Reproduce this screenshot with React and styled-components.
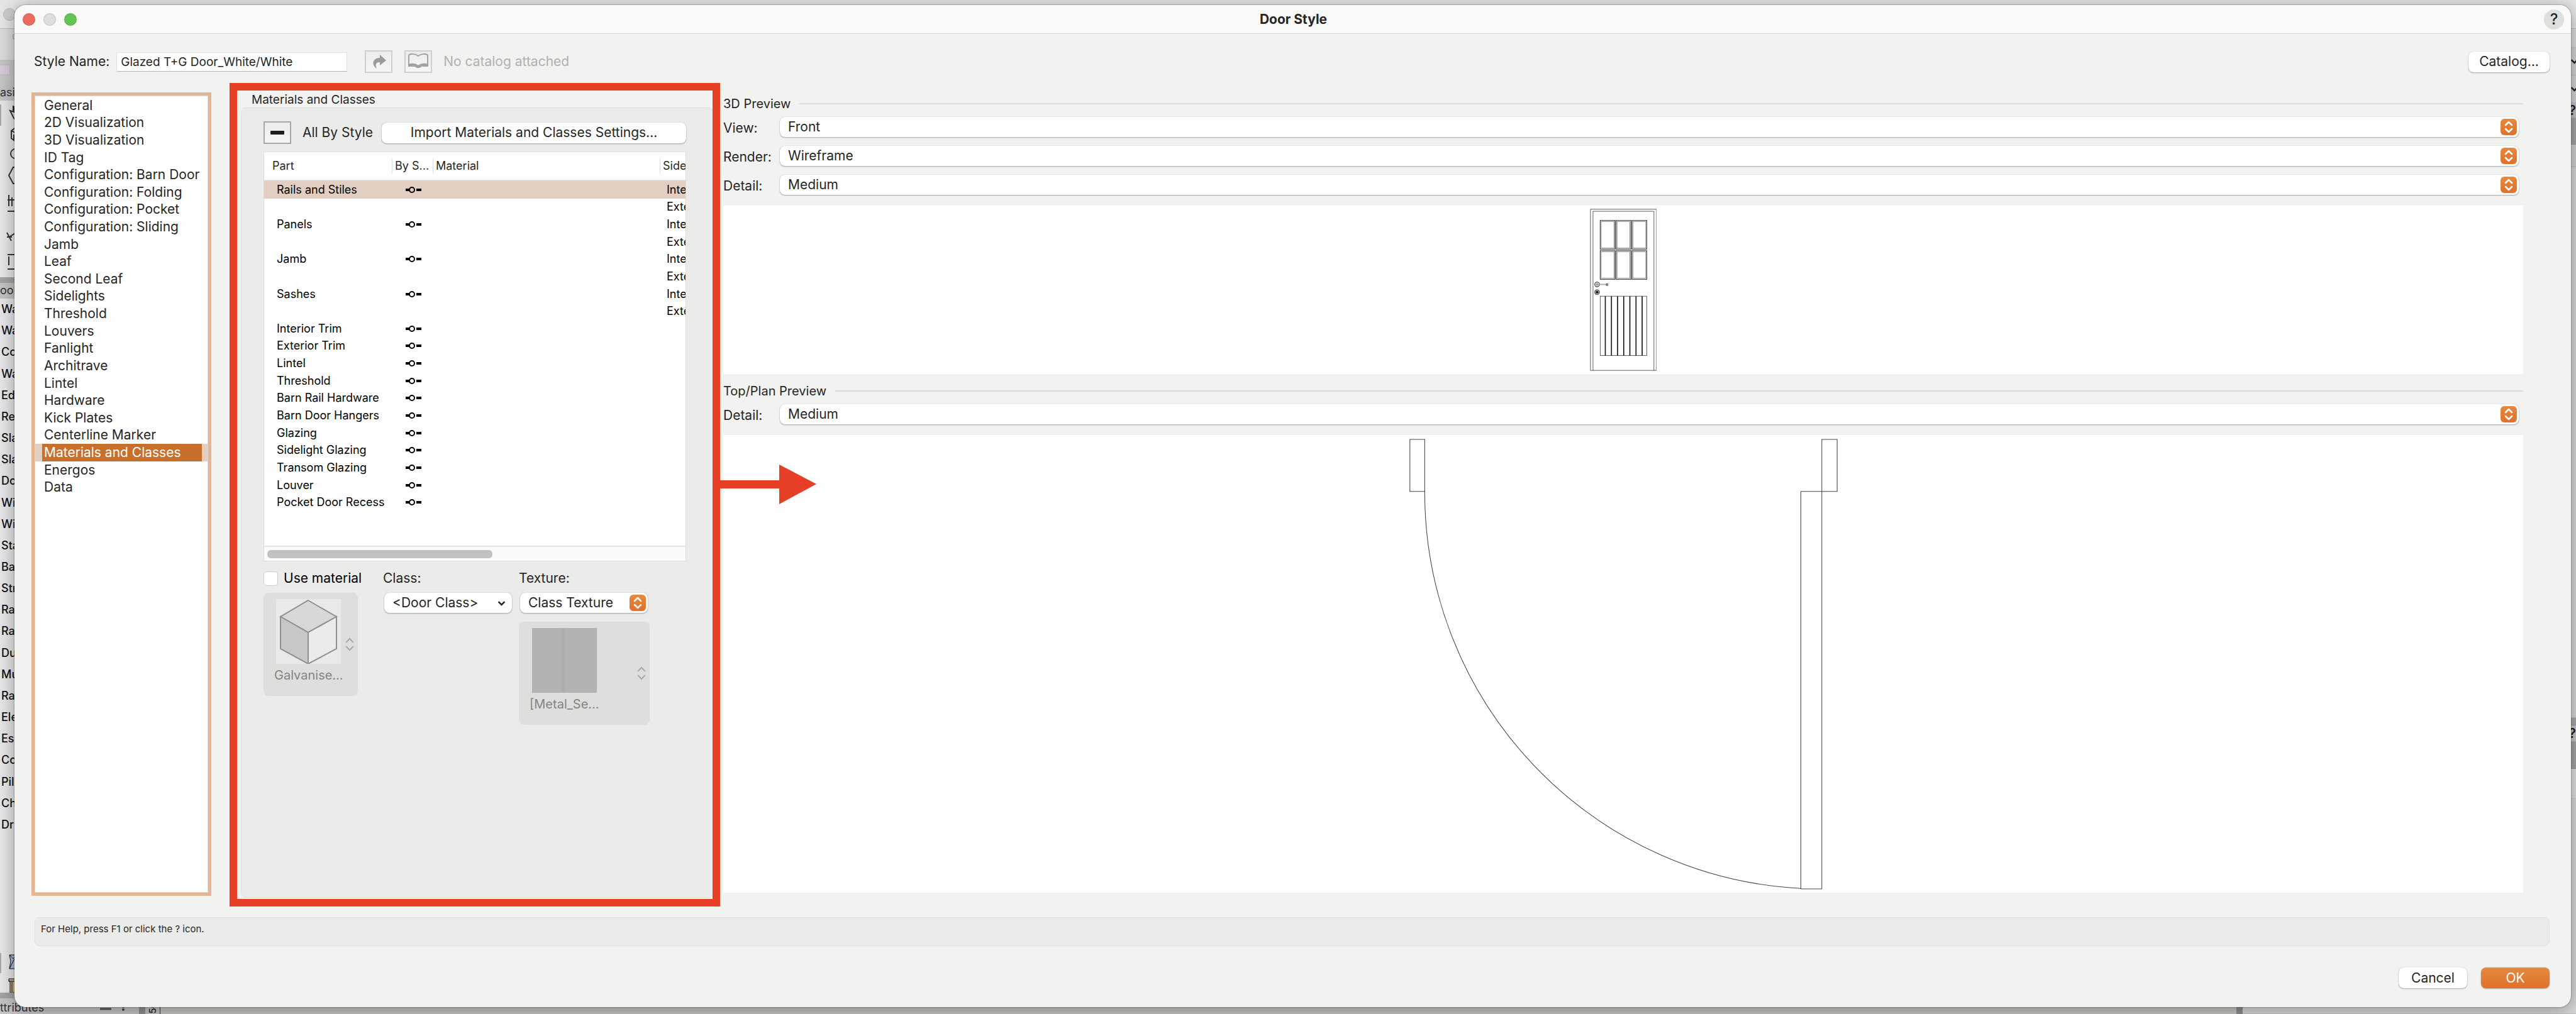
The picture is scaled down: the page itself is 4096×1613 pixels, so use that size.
import React from "react";
import styled, { createGlobalStyle } from "styled-components";

const COLORS = {
  text: "#262626",
  window: "#f2f2f0",
  titleBar: "#f9f9f7",
  group: "#ebebe9",
  line: "#d5d5d3",
  accent: "#c86f2c",
  accentSoft: "#e3cfc2",
  ring: "#e5b592",
  orangeTop: "#e58a3f",
  orangeBottom: "#e1702a",
  red: "#e63f25",
};

const CATEGORIES = [
  "General",
  "2D Visualization",
  "3D Visualization",
  "ID Tag",
  "Configuration: Barn Door",
  "Configuration: Folding",
  "Configuration: Pocket",
  "Configuration: Sliding",
  "Jamb",
  "Leaf",
  "Second Leaf",
  "Sidelights",
  "Threshold",
  "Louvers",
  "Fanlight",
  "Architrave",
  "Lintel",
  "Hardware",
  "Kick Plates",
  "Centerline Marker",
  "Materials and Classes",
  "Energos",
  "Data",
];

const PARTS = [
  { name: "Rails and Stiles", side: "Inte", selected: true },
  { side: "Exte" },
  { name: "Panels", side: "Inte" },
  { side: "Exte" },
  { name: "Jamb", side: "Inte" },
  { side: "Exte" },
  { name: "Sashes", side: "Inte" },
  { side: "Exte" },
  { name: "Interior Trim" },
  { name: "Exterior Trim" },
  { name: "Lintel" },
  { name: "Threshold" },
  { name: "Barn Rail Hardware" },
  { name: "Barn Door Hangers" },
  { name: "Glazing" },
  { name: "Sidelight Glazing" },
  { name: "Transom Glazing" },
  { name: "Louver" },
  { name: "Pocket Door Recess" },
];

const TOOLS = [
  "Wa", "Wa", "Cor", "Wa", "Edi", "Ren", "Sla", "Sla", "Doc", "Win", "Win", "Sta", "Bas",
  "Str", "Rai", "Rai", "Dup", "Mu", "Ran", "Ele", "Esc", "Col", "Pila", "Cha", "Dri",
];

const App = () => (
  <Desktop>
    <GlobalStyle />
    <Backdrop />
    <Dialog>
      <TitleBar>
        <Lights>
          <Light color="#ed6a5e" />
          <Light color="#dededc" />
          <Light color="#62c554" />
        </Lights>
        <Title>Door Style</Title>
        <HelpButton>?</HelpButton>
      </TitleBar>

      <Body>
        <Header>
          <label htmlFor="style-name">Style Name:</label>
          <NameInput id="style-name" defaultValue="Glazed T+G Door_White/White" />
          <IconButton aria-label="Reload">
            <ArrowIcon />
          </IconButton>
          <IconButton aria-label="Open catalog">
            <BookIcon />
          </IconButton>
          <Muted>No catalog attached</Muted>
          <CatalogButton>Catalog...</CatalogButton>
        </Header>

        <Main>
          <CategoryList>
            {CATEGORIES.map((name) => (
              <Category key={name} $selected={name === "Materials and Classes"}>
                <CategoryButton>{name}</CategoryButton>
              </Category>
            ))}
          </CategoryList>
          <MaterialsPanel />
          <Previews />
        </Main>

        <HelpBar>For Help, press F1 or click the ? icon.</HelpBar>

        <Footer>
          <PushButton>Cancel</PushButton>
          <PushButton $primary>OK</PushButton>
        </Footer>
      </Body>
    </Dialog>
  </Desktop>
);

export default App;

const MaterialsPanel = () => (
  <PanelColumn>
    <GroupTitle>Materials and Classes</GroupTitle>
    <GroupBox>
      <ByStyleRow>
        <IconButton $strong aria-label="All By Style">
          <Dash />
        </IconButton>
        <ByStyleText>All By Style</ByStyleText>
        <ImportButton>Import Materials and Classes Settings...</ImportButton>
      </ByStyleRow>

      <TableFrame>
        <PartTable>
          <thead>
            <HeadRow>
              <th>Part</th>
              <th>By S...</th>
              <th>Material</th>
              <th>Side</th>
            </HeadRow>
          </thead>
          <PartRows>
            {PARTS.map(({ name, side, selected }, index) => (
              <PartRow key={index} $selected={selected}>
                <td>{name}</td>
                <td>{name && <ByStyleIcon />}</td>
                <td />
                <td>{side}</td>
              </PartRow>
            ))}
          </PartRows>
        </PartTable>
        <ScrollTrack>
          <ScrollThumb />
        </ScrollTrack>
      </TableFrame>

      <Attributes>
        <CheckLabel>
          <CheckBox type="checkbox" />
          Use material
        </CheckLabel>
        <label htmlFor="class">Class:</label>
        <label htmlFor="texture">Texture:</label>

        <ResourceButton disabled>
          <Swatch>
            <CubeIcon />
            <span>Galvanise...</span>
          </Swatch>
          <StepperIcon />
        </ResourceButton>
        <SmallSelect>
          <Select id="class" defaultValue="<Door Class>">
            <option>{"<Door Class>"}</option>
          </Select>
          <Chevron viewBox="0 0 16 10">
            <path d="M2 2l6 6 6-6" />
          </Chevron>
        </SmallSelect>
        <TextureColumn>
          <SmallSelect>
            <Select id="texture" defaultValue="Class Texture">
              <option>Class Texture</option>
            </Select>
            <Stepper />
          </SmallSelect>
          <ResourceButton disabled $wide>
            <Swatch>
              <MetalTexture />
              <span>[Metal_Se...</span>
            </Swatch>
            <StepperIcon />
          </ResourceButton>
        </TextureColumn>
      </Attributes>
    </GroupBox>
    <Highlight />
    <HighlightArrow viewBox="0 0 154 66">
      <path d="M0 26h95V1l59 31-59 32V39H0z" />
    </HighlightArrow>
  </PanelColumn>
);

const Previews = () => (
  <PreviewColumn>
    <PreviewTitle>3D Preview</PreviewTitle>
    <Fields>
      <Field label="View:" id="view" value="Front" />
      <Field label="Render:" id="render" value="Wireframe" />
      <Field label="Detail:" id="detail-3d" value="Medium" />
    </Fields>
    <Canvas $height="268px">
      <DoorElevation />
    </Canvas>
    <PreviewTitle $second>Top/Plan Preview</PreviewTitle>
    <Fields>
      <Field label="Detail:" id="detail-plan" value="Medium" />
    </Fields>
    <Canvas>
      <DoorPlan />
    </Canvas>
  </PreviewColumn>
);

const Field = ({ label, id, value }) => (
  <FieldRow>
    <label htmlFor={id}>{label}</label>
    <SelectFrame>
      <Select id={id} defaultValue={value}>
        <option>{value}</option>
      </Select>
      <Stepper />
    </SelectFrame>
  </FieldRow>
);

const Stepper = () => (
  <StepperBox>
    <svg width="14" height="20" viewBox="0 0 14 20">
      <path d="M2 7l5-5 5 5M2 13l5 5 5-5" />
    </svg>
  </StepperBox>
);

// The application that shows round the edges of the dialog.
const Backdrop = () => (
  <Behind>
    <BehindBar>
      <BehindLight />
    </BehindBar>
    <BehindBody>
      <Palette>
        <PaletteTop>
          <svg width="24" height="49" viewBox="0 0 24 49">
            <path d="M30 9h-9v7h9" fill="none" stroke="#999" strokeWidth="1" />
          </svg>
        </PaletteTop>
        <PaletteBand>
          <PinkBox />
        </PaletteBand>
        <PaletteHead>asic</PaletteHead>
        <PaletteIcons />
        <PaletteGap />
        <PaletteHead>ool</PaletteHead>
        <ToolList>
          {TOOLS.map((tool, index) => (
            <li key={index}>{tool}</li>
          ))}
        </ToolList>
        <ToolSets>
          <svg width="24" height="72" viewBox="0 0 24 72">
            <path d="M0 9h2v32H0z" fill="#aaa" />
            <path d="M30 12H15l2 10-2 12h15z" fill="#a9bdd3" stroke="#111" />
            <path d="M15 12l6 6 5-6M15 34l8-16" fill="none" stroke="#111" />
            <path d="M30 50H14v4h2v18h14z" fill="#cdb28c" stroke="#111" />
            <path d="M19 55v16M14 54h16" fill="none" stroke="#111" />
          </svg>
        </ToolSets>
        <PaletteGap />
        <AttributesHead>
          <span>ttributes</span>
          <svg width="42" height="14" viewBox="0 0 42 14">
            <path d="M0 4h18M0 9h18" stroke="#555" strokeWidth="3" />
            <circle cx="37" cy="5" r="2" fill="#444" />
            <circle cx="37" cy="10" r="2" fill="#444" />
          </svg>
        </AttributesHead>
      </Palette>
      <Gutter />
      <Ruler>
        <span>50</span>
      </Ruler>
      <Drawing />
      <Gutter />
      <RightPalette>
        <RightSection $height="30px" $shade="#dcdcdc" />
        <RightSection $height="44px" $shade="#d2d2d2">
          <RightChevron viewBox="0 0 16 10">
            <path d="M2 2l6 6 6-6" />
          </RightChevron>
        </RightSection>
        <RightSection $height="44px" $shade="#d2d2d2">
          <RightChevron viewBox="0 0 16 10">
            <path d="M2 2l6 6 6-6" />
          </RightChevron>
        </RightSection>
        <RightSection $height="24px" $shade="#c2c2c2">?</RightSection>
        <RightSection $height="42px" $shade="#a4a4a4" />
        <RightSection $height="36px" $shade="#cfcfcf" />
        <RightSection $grow $shade="#d6d6d6" />
        <RightSection $height="12px" $shade="#a8a8a8" />
        <RightSection $height="26px" $shade="#c6c6c6">?</RightSection>
        <RightSection $height="43px" $shade="#a4a4a4" />
        <RightSection $height="48px" $shade="#dedede" />
        <RightSection $height="342px" $shade="#d8d8d8" />
      </RightPalette>
    </BehindBody>
  </Behind>
);

const PaletteIcons = () => (
  <IconStrip>
    <svg width="24" height="280" viewBox="0 0 24 280" fill="none" stroke="#333" strokeWidth="2">
      <path d="M0 7v32h1V7z" stroke="#aaa" />
      <path d="M26 10h-4v8l-6-2 6 12 4 3M21 8v10" />
      <path d="M26 42l-8 6v12l8 6M18 48l8 4M22 54v10" />
      <path d="M26 76c-12 2-12 15 0 17" />
      <path d="M26 106h-5l-7 13 7 13h5" />
      <path d="M12 158h12M14 150v18M19 154v14" />
      <path d="M12 176h14" />
      <path d="M11 210l7 13M16 216l10-6M11 217h8" />
      <path d="M12 245h14M12 268h14M14 248v14" />
    </svg>
  </IconStrip>
);

const ArrowIcon = () => (
  <svg width="26" height="26" viewBox="0 0 26 26" fill="#9b9b99">
    <path d="M15 2l10 9-10 8v-5c-6 0-8 3-5 10C3 20 1 8 15 7z" />
  </svg>
);

const BookIcon = () => (
  <svg width="34" height="28" viewBox="0 0 34 28">
    <path d="M1 5v17h11c2 3 8 3 10 0h11V5l-2 13c-5-1-11-1-14 2-3-3-9-3-14-2z" fill="#a2a2a0" />
    <path
      d="M2 4c2-3 10-3 15 1 5-4 13-4 15-1v15c-5-2-11-1-15 2-4-3-10-4-15-2z"
      fill="none"
      stroke="#a2a2a0"
      strokeWidth="2"
    />
  </svg>
);

const ByStyleIcon = () => (
  <svg width="25" height="12" viewBox="0 0 25 12">
    <path d="M0 6h6M17 6h8" stroke="#000" strokeWidth="4" />
    <circle cx="10" cy="6" r="4" fill="none" stroke="#000" strokeWidth="2" />
  </svg>
);

const CubeIcon = () => (
  <svg width="103" height="103" viewBox="0 0 103 103" stroke="#909090" strokeWidth="2">
    <path d="M0 0h103v103H0z" fill="#e9e9eb" stroke="none" />
    <path d="M51 2l45 26-45 25L7 28z" fill="#d8d8d8" />
    <path d="M7 28l44 25v50L7 79z" fill="#c7c7c7" />
    <path d="M96 28L51 53v50l45-24z" fill="#ebebeb" />
  </svg>
);

const MetalTexture = () => (
  <svg width="103" height="103" viewBox="0 0 103 103">
    <path d="M0 0h103v103H0z" fill="#b2b2b1" />
    <path d="M49 0v103" stroke="#acacab" strokeWidth="4" />
  </svg>
);

const StepperIcon = () => (
  <svg width="14" height="22" viewBox="0 0 14 22" fill="none" stroke="#a9a9a7" strokeWidth="2">
    <path d="M1 8l6-6 6 6M1 14l6 6 6-6" />
  </svg>
);

const DoorElevation = () => (
  <svg width="106" height="258" viewBox="0 0 130 317" fill="none" stroke="#3a3a3a">
    <path d="M1 1h129v315H1z" />
    <path d="M6 316V5h119v311" />
    {[20, 51, 82].map((x) =>
      [23, 82].map((y) => (
        <g key={`${x}-${y}`}>
          <rect x={x} y={y} width="29" height="56" stroke="#222" strokeWidth="1.2" />
          <rect x={x + 2} y={y + 2} width="25" height="52" stroke="#777" />
        </g>
      ))
    )}
    <rect x="20" y="171" width="91" height="116" />
    {[30, 42, 54, 66, 78, 90, 102].map((x) => (
      <path key={x} d={`M${x} 171v116`} stroke="#111" strokeWidth="2" />
    ))}
    <circle cx="14" cy="148" r="4.5" stroke="#111" strokeWidth="1.3" />
    <circle cx="14" cy="148" r="1.5" stroke="#111" />
    <path d="M19 148h13" stroke="#bbb" strokeWidth="3" />
    <rect x="32" y="147" width="3" height="3" stroke="#111" />
    <circle cx="14" cy="163" r="4.5" stroke="#111" strokeWidth="1.3" />
    <circle cx="14" cy="163" r="2.5" fill="#111" />
  </svg>
);

const DoorPlan = () => (
  <svg width="681" height="717" viewBox="0 0 838 882" fill="none" stroke="#444" strokeWidth="1.3">
    <path d="M1 1h29v102H1z" />
    <path d="M807 1h30v102h-30z" />
    <path d="M766 103h41v778h-41z" />
    <path d="M30 103a777 777 0 0 0 736 777" />
  </svg>
);

const GlobalStyle = createGlobalStyle`
  * {
    box-sizing: border-box;
  }

  body {
    margin: 0;
    color: ${COLORS.text};
    font-family: Inter, "Liberation Sans", sans-serif;
    font-size: 21px;
    line-height: 24px;
  }

  button,
  input,
  select {
    margin: 0;
    color: inherit;
    font: inherit;
  }

  svg {
    display: block;
    flex: none;
  }
`;

const Desktop = styled.div`
  position: relative;
  height: 100vh;
  min-height: 1500px;
  overflow: hidden;
`;

const Dialog = styled.section`
  position: absolute;
  top: 8px;
  right: 8px;
  bottom: 11px;
  left: 23px;
  display: flex;
  flex-direction: column;
  border-radius: 18px;
  background: ${COLORS.window};
  box-shadow: 0 0 2px rgba(0, 0, 0, 0.6), 0 4px 28px rgba(0, 0, 0, 0.35);
  overflow: hidden;
`;

const TitleBar = styled.header`
  display: grid;
  grid-template-columns: 1fr auto 1fr;
  align-items: center;
  height: 46px;
  padding: 0 11px 0 13px;
  background: ${COLORS.titleBar};
  border-bottom: 1px solid ${COLORS.line};
`;

const Lights = styled.div`
  display: flex;
  gap: 13px;
`;

const Light = styled.span`
  width: 20px;
  height: 20px;
  border: 1px solid rgba(0, 0, 0, 0.12);
  border-radius: 50%;
  background: ${({ color }) => color};
`;

const Title = styled.h1`
  margin: 0;
  font-size: 21px;
  font-weight: 700;
`;

const HelpButton = styled.button`
  justify-self: end;
  width: 32px;
  height: 32px;
  padding: 0;
  border: none;
  border-radius: 50%;
  background: #dfdfdd;
  font-size: 24px;
  font-weight: 500;
`;

const Body = styled.div`
  flex: 1;
  display: flex;
  flex-direction: column;
  padding: 0 34px 30px 31px;
`;

const Header = styled.div`
  display: flex;
  align-items: center;
  height: 88px;
  margin-bottom: 3px;
`;

const NameInput = styled.input`
  width: 367px;
  height: 31px;
  margin: 0 28px 0 11px;
  padding: 0 6px;
  border: 1px solid #e0e0de;
  border-bottom-color: #b5b5b3;
  background: #fff;
  font-size: 19px;
`;

const IconButton = styled.button`
  display: flex;
  align-items: center;
  justify-content: center;
  width: 44px;
  height: 36px;
  padding: 0;
  border: 2px solid ${({ $strong }) => ($strong ? "#a8a8a8" : "#cfcfcd")};
  background: linear-gradient(#ececec, #f6f6f8);

  & + & {
    margin-left: 19px;
  }
`;

const Dash = styled.span`
  width: 22px;
  height: 6px;
  border-radius: 1px;
  background: #1e1e1e;
`;

const Muted = styled.span`
  margin-left: 18px;
  color: #b1b1af;
`;

const PushButton = styled.button`
  width: 109px;
  height: 33px;
  padding: 0;
  border: none;
  border-radius: 8px;
  background: ${({ $primary }) =>
    $primary ? `linear-gradient(${COLORS.orangeTop}, ${COLORS.orangeBottom})` : "#fff"};
  box-shadow: 0 0 1px rgba(0, 0, 0, 0.3), 0 1px 2px rgba(0, 0, 0, 0.3);
  color: ${({ $primary }) => ($primary ? "#fff" : COLORS.text)};
`;

const CatalogButton = styled(PushButton)`
  width: 129px;
  margin-left: auto;
`;

const ByStyleText = styled.span`
  margin-left: 18px;
  white-space: nowrap;
`;

const ImportButton = styled(PushButton)`
  flex: none;
  width: 484px;
  margin-left: auto;
`;

const Main = styled.main`
  flex: 1;
  display: grid;
  grid-template-columns: 276px 751px 1fr;
  column-gap: 16px;
  padding: 0 42px 0 1px;
`;

const CategoryList = styled.ul`
  display: grid;
  grid-template-columns: minmax(0, 1fr);
  grid-auto-rows: 1fr;
  height: 1268px;
  margin: 7px 0 0;
  padding: 1px 0 630px;
  border: 1px solid #d8d8d8;
  background: #fff;
  box-shadow: 0 0 0 5px ${COLORS.ring};
  list-style: none;
`;

const Category = styled.li`
  display: flex;
  padding: 0 9px 0 11px;
  background: ${({ $selected }) => ($selected ? COLORS.accentSoft : "none")};
  color: ${({ $selected }) => ($selected ? "#fff" : COLORS.text)};

  button {
    background: ${({ $selected }) => ($selected ? COLORS.accent : "none")};
  }
`;

const CategoryButton = styled.button`
  flex: 1;
  padding: 0 0 0 3px;
  border: none;
  text-align: left;
  white-space: nowrap;
`;

const PanelColumn = styled.section`
  position: relative;
  display: flex;
  flex-direction: column;
  margin-left: 36px;
  margin-right: -36px;
`;

const GroupTitle = styled.h2`
  margin: 0;
  padding: 2px 17px 0;
  font-size: 19px;
  font-weight: 400;
`;

const GroupBox = styled.div`
  flex: 1;
  padding: 21px 42px 0 35px;
  border: 1px solid #dededc;
  border-radius: 8px;
  background: ${COLORS.group};
`;

const ByStyleRow = styled.div`
  display: flex;
  align-items: center;
  margin-bottom: 12px;
`;

const TableFrame = styled.div`
  border: 1px solid #dededc;
  background: #fff;
  overflow: hidden;
`;

const PartTable = styled.table`
  display: block;
  width: 760px;
  height: 626px;
  color: #000;
  font-size: 18px;

  th,
  td {
    padding: 0;
    font-weight: 400;
    text-align: left;
    white-space: nowrap;
  }

  thead,
  tbody {
    display: block;
  }
`;

const HeadRow = styled.tr`
  display: grid;
  grid-template-columns: 203px 65px 361px 1fr;
  align-items: center;
  height: 46px;
  border-bottom: 2px solid #dededc;
  color: ${COLORS.text};

  && th {
    padding-left: 4px;
    border-left: 1px solid #dcdcdc;
  }

  && th:first-child {
    padding-left: 13px;
    border-left: none;
  }
`;

const PartRows = styled.tbody`
  && {
    display: grid;
  }
  grid-auto-rows: 1fr;
  height: 525px;
`;

const PartRow = styled.tr`
  display: grid;
  grid-template-columns: 203px 65px 361px 1fr;
  align-items: center;
  background: ${({ $selected }) => ($selected ? COLORS.accentSoft : "none")};

  && td {
    padding-left: 11px;
  }

  && td:first-child {
    padding-left: 20px;
  }

  && td:nth-child(2) {
    padding-left: 22px;
  }
`;

const ScrollTrack = styled.div`
  height: 24px;
  padding: 5px;
  border-top: 2px solid #e4e4e4;
  background: #fafafa;
`;

const ScrollThumb = styled.div`
  width: 358px;
  height: 13px;
  border-radius: 6px;
  background: #c1c1c1;
`;

const Attributes = styled.div`
  display: grid;
  grid-template-columns: 190px 216px 1fr;
  align-items: start;
  row-gap: 11px;
  margin-top: 15px;
`;

const CheckLabel = styled.label`
  display: flex;
  align-items: center;
  gap: 9px;
  color: #000;
`;

const CheckBox = styled.input`
  appearance: none;
  width: 23px;
  height: 23px;
  border: 1px solid #cfcfcf;
  border-radius: 5px;
  background: #fff;
`;

const SelectFrame = styled.div`
  position: relative;
  display: flex;
  flex: 1;
`;

const SmallSelect = styled(SelectFrame)`
  flex: none;
  width: 203px;
  margin-left: 2px;
`;

const Select = styled.select`
  appearance: none;
  width: 100%;
  height: 32px;
  padding: 0 13px 1px;
  border: none;
  border-radius: 8px;
  background: #fff;
  box-shadow: 0 0 1px rgba(0, 0, 0, 0.3), 0 1px 2px rgba(0, 0, 0, 0.3);
`;

const StepperBox = styled.span`
  position: absolute;
  top: 3px;
  right: 3px;
  display: flex;
  align-items: center;
  justify-content: center;
  width: 26px;
  height: 26px;
  border-radius: 6px;
  background: linear-gradient(${COLORS.orangeTop}, ${COLORS.orangeBottom});
  pointer-events: none;

  path {
    fill: none;
    stroke: #fff;
    stroke-width: 2.5;
    stroke-linecap: round;
    stroke-linejoin: round;
  }
`;

const Chevron = styled.svg`
  position: absolute;
  top: 12px;
  right: 10px;
  width: 13px;
  height: 9px;
  pointer-events: none;

  path {
    fill: none;
    stroke: #222;
    stroke-width: 3;
  }
`;

const ResourceButton = styled.button`
  display: flex;
  align-items: center;
  justify-content: space-between;
  width: ${({ $wide }) => ($wide ? "208px" : "150px")};
  height: 164px;
  padding: 0 6px 0 17px;
  border: none;
  border-radius: 8px;
  background: #dededd;
  color: #858585;
  font-size: 20px;
`;

const Swatch = styled.span`
  display: flex;
  flex-direction: column;
  align-items: center;
  align-self: flex-start;
  gap: 6px;
  padding-top: 10px;
`;

const TextureColumn = styled.div`
  display: flex;
  flex-direction: column;
  gap: 14px;
`;

// Annotation drawn over the materials panel.
const Highlight = styled.div`
  position: absolute;
  inset: -13px -11px -14px -18px;
  border: 12px solid ${COLORS.red};
  pointer-events: none;
`;

const HighlightArrow = styled.svg`
  position: absolute;
  top: 593px;
  left: 761px;
  z-index: 1;
  width: 154px;
  height: 66px;
  fill: ${COLORS.red};
`;

const PreviewColumn = styled.section`
  display: flex;
  flex-direction: column;
  margin-left: 36px;
  padding: 8px 0;
`;

const PreviewTitle = styled.h2`
  display: flex;
  align-items: center;
  gap: 14px;
  margin: ${({ $second }) => ($second ? "15px 0 9px" : "0 0 9px")};
  font-size: 20px;
  font-weight: 400;

  &::after {
    content: "";
    flex: 1;
    height: 2px;
    background: #dcdcda;
  }
`;

const Fields = styled.div`
  display: grid;
  row-gap: 14px;
  margin-bottom: 17px;
  padding-right: 7px;
`;

const FieldRow = styled.div`
  display: flex;
  align-items: center;

  label {
    width: 90px;
    padding-top: 3px;
  }
`;

const Canvas = styled.div`
  display: flex;
  align-items: center;
  justify-content: center;
  height: ${({ $height }) => $height};
  flex: ${({ $height }) => ($height ? "none" : 1)};
  background: #fff;
`;

const HelpBar = styled.footer`
  height: 46px;
  margin: 31px 0 34px 1px;
  padding: 6px 9px;
  border: 1px solid #e0e0de;
  border-radius: 8px;
  background: ${COLORS.group};
  font-size: 15px;
`;

const Footer = styled.div`
  display: flex;
  justify-content: flex-end;
  gap: 22px;
`;

const Behind = styled.div`
  display: flex;
  flex-direction: column;
  height: 100%;
  background: #d8d8d8;
`;

const BehindBar = styled.div`
  display: flex;
  align-items: center;
  height: 46px;
  padding-left: 5px;
  border-bottom: 1px solid #bdbdbd;
  background: #e6e6e6;
`;

const BehindLight = styled.span`
  width: 20px;
  height: 20px;
  border: 1px solid #b5b5b5;
  border-radius: 50%;
  background: #cecece;
`;

const BehindBody = styled.div`
  flex: 1;
  display: grid;
  grid-template-columns: 221px 10px 24px 1fr 10px 530px;
`;

const Palette = styled.div`
  display: flex;
  flex-direction: column;
  background: #e6e6e9;
  color: #111;
  font-size: 18px;
`;

const PaletteTop = styled.div`
  height: 49px;
  background: #dcdcdc;
`;

const PaletteBand = styled.div`
  height: 40px;
  padding-top: 7px;
  background: #c6c6c6;
`;

const PinkBox = styled.div`
  width: 17px;
  height: 18px;
  border: 2px solid #cbb8cb;
  border-left: none;
  background: #d6ccd6;
`;

const PaletteHead = styled.div`
  height: 25px;
  background: #c3c3c3;
  color: #333;
`;

const IconStrip = styled.div`
  height: 281px;
`;

const PaletteGap = styled.div`
  height: 9px;
  background: #a3a3a3;
`;

const ToolList = styled.ul`
  display: grid;
  grid-auto-rows: 1fr;
  align-items: center;
  height: 854px;
  margin: 0;
  padding: 0 2px;
  list-style: none;
  font-weight: 500;
`;

const ToolSets = styled.div`
  display: flex;
  flex: 1;
  align-items: flex-end;
`;

const AttributesHead = styled.div`
  display: flex;
  align-items: center;
  justify-content: space-between;
  height: 25px;
  padding: 4px 20px 0 0;
  background: #c3c3c3;
  color: #333;
`;

const Gutter = styled.div`
  background: #8d8d8d;
`;

const Ruler = styled.div`
  display: flex;
  align-items: flex-end;
  background: #c2c2bf;
  border-right: 1px solid #333;
  color: #111;
  font-size: 15px;

  span {
    writing-mode: vertical-rl;
    transform: rotate(180deg);
  }
`;

const Drawing = styled.div`
  background: #c4c5be;
`;

const RightPalette = styled.div`
  display: flex;
  flex-direction: column;
`;

const RightSection = styled.div`
  display: flex;
  flex: ${({ $grow }) => ($grow ? 1 : "none")};
  align-items: center;
  justify-content: flex-end;
  height: ${({ $height }) => $height};
  border-bottom: 1px solid rgba(0, 0, 0, 0.1);
  background: ${({ $shade }) => $shade};
  color: #222;
  font-size: 21px;
  font-weight: 600;
`;

const RightChevron = styled(Chevron)`
  position: static;
  margin-right: -4px;
`;
